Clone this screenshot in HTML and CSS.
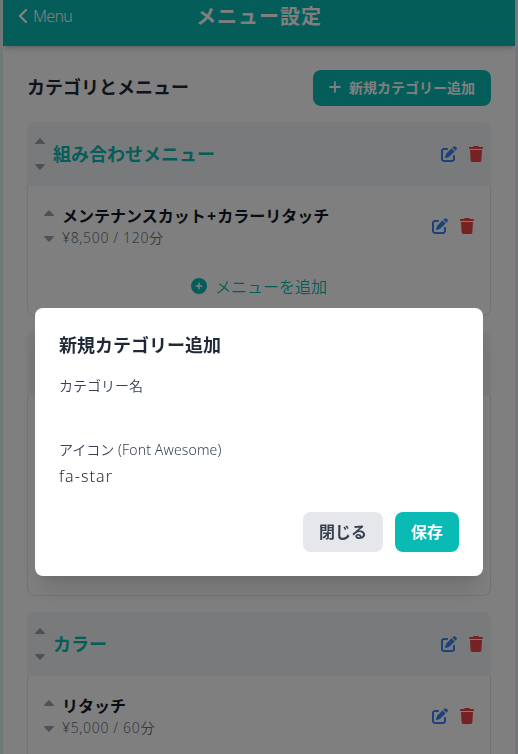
FILE: index.html
```html
<!DOCTYPE html>
<html lang="ja">
<head>
<meta charset="utf-8">
<title>メニュー設定</title>
<link rel="stylesheet" href="styles.css">
</head>
<body>
<svg class="defs" aria-hidden="true">
  <symbol id="edit" viewBox="0 0 512 512"><path d="M471.600 21.700c-21.900-21.900-57.300-21.900-79.200 0L362.300 51.700l97.900 97.900 30.100-30.100c21.900-21.900 21.900-57.300 0-79.200L471.600 21.700zm-299.200 220c-6.100 6.100-10.800 13.600-13.500 21.900l-29.600 88.800c-2.900 8.600-.6 18.100 5.800 24.600s15.900 8.700 24.600 5.800l88.800-29.600c8.200-2.700 15.700-7.400 21.900-13.500L437.700 172.300 339.700 74.300 172.400 241.700zM96 64C43 64 0 107 0 160V416c0 53 43 96 96 96H352c53 0 96-43 96-96V320c0-17.700-14.300-32-32-32s-32 14.300-32 32v96c0 17.700-14.300 32-32 32H96c-17.700 0-32-14.300-32-32V160c0-17.700 14.300-32 32-32h96c17.700 0 32-14.300 32-32s-14.300-32-32-32H96z"/></symbol>
  <symbol id="trash" viewBox="0 0 448 512"><path d="M135.200 17.700L128 32H32C14.300 32 0 46.300 0 64S14.300 96 32 96H416c17.700 0 32-14.300 32-32s-14.300-32-32-32H320l-7.200-14.300C307.400 6.800 296.300 0 284.200 0H163.800c-12.100 0-23.200 6.800-28.600 17.700zM416 128H32L53.200 467c1.600 25.300 22.600 45 47.900 45H346.900c25.300 0 46.300-19.700 47.900-45L416 128z"/></symbol>
  <symbol id="up" viewBox="0 0 10 6"><path d="M.7 6Q-.4 6 .3 5L4.300.6Q5 0 5.700.6L9.700 5Q10.400 6 9.300 6Z"/></symbol>
  <symbol id="down" viewBox="0 0 10 6"><path d="M.7 0Q-.4 0 .3 1L4.300 5.400Q5 6 5.700 5.400L9.700 1Q10.400 0 9.300 0Z"/></symbol>
  <symbol id="add" viewBox="0 0 16 16"><path fill-rule="evenodd" d="M8 0a8 8 0 1 0 0 16A8 8 0 0 0 8 0zM7.250 10.750v-2h-2a.75.75 0 0 1 0-1.500h2v-2a.75.75 0 0 1 1.500 0v2h2a.75.75 0 0 1 0 1.500h-2v2a.75.75 0 0 1-1.500 0z"/></symbol>
</svg>

<div class="app">
  <header class="topbar">
    <a class="back"><svg class="chevron" viewBox="0 0 10 16"><path d="M8 2L2 8l6 6"/></svg>Menu</a>
    <h1 class="page-title">メニュー設定</h1>
  </header>
  <main class="content">
    <div class="heading-row">
      <h2 class="heading">カテゴリとメニュー</h2>
      <button class="new-category"><svg class="plus" viewBox="0 0 12 12"><path d="M6 1v10M1 6h10"/></svg>新規カテゴリー追加</button>
    </div>

    <section class="card">
      <div class="card-head">
        <div class="sort"><svg><use href="#up"/></svg><svg><use href="#down"/></svg></div>
        <h3 class="card-title">組み合わせメニュー</h3>
        <div class="actions"><svg class="edit"><use href="#edit"/></svg><svg class="trash"><use href="#trash"/></svg></div>
      </div>
      <div class="card-body">
        <div class="item">
          <div class="sort"><svg><use href="#up"/></svg><svg><use href="#down"/></svg></div>
          <div class="item-text"><p class="name">メンテナンスカット<span class="joiner">+</span>カラーリタッチ</p><p class="price">¥8,500 / 120分</p></div>
          <div class="actions"><svg class="edit"><use href="#edit"/></svg><svg class="trash"><use href="#trash"/></svg></div>
        </div>
        <a class="add-menu"><svg><use href="#add"/></svg>メニューを追加</a>
      </div>
    </section>

    <section class="card card-covered">
      <div class="card-head"></div>
      <div class="card-body"></div>
    </section>

    <section class="card">
      <div class="card-head">
        <div class="sort"><svg><use href="#up"/></svg><svg><use href="#down"/></svg></div>
        <h3 class="card-title">カラー</h3>
        <div class="actions"><svg class="edit"><use href="#edit"/></svg><svg class="trash"><use href="#trash"/></svg></div>
      </div>
      <div class="card-body">
        <div class="item">
          <div class="sort"><svg><use href="#up"/></svg><svg><use href="#down"/></svg></div>
          <div class="item-text"><p class="name">リタッチ</p><p class="price">¥5,000 / 60分</p></div>
          <div class="actions"><svg class="edit"><use href="#edit"/></svg><svg class="trash"><use href="#trash"/></svg></div>
        </div>
      </div>
    </section>
  </main>
</div>

<div class="overlay">
  <div class="modal">
    <h2 class="modal-title">新規カテゴリー追加</h2>
    <div class="field"><div class="label">カテゴリー名</div><div class="value"></div></div>
    <div class="field"><div class="label">アイコン <span class="hint">(Font Awesome)</span></div><div class="value">fa-star</div></div>
    <div class="buttons"><button class="btn close">閉じる</button><button class="btn save">保存</button></div>
  </div>
</div>
</body>
</html>
```
FILE: styles.css
```css
* { box-sizing: border-box; margin: 0; padding: 0; }
html, body { height: 754px; overflow: hidden; }
body {
  background: #e0f2ef;
  color: #1f2937;
  font-family: "Noto Sans", "Noto Sans CJK JP", sans-serif;
  font-size: 16px;
  font-weight: 350;
}
svg { display: block; fill: currentColor; }
button { border: 0; font: inherit; }
.defs { display: none; }
.app { width: 512px; height: 754px; margin: 0 auto; background: #fff; overflow: hidden; }
.topbar {
  height: 46px;
  padding: 0 16px 12px;
  display: grid;
  grid-template-columns: 1fr auto 1fr;
  align-items: center;
  background: #0abab5;
  color: #fff;
  box-shadow: 0 4px 6px -1px rgba(0,0,0,.15), 0 2px 4px -2px rgba(0,0,0,.15);
}
.back { display: flex; align-items: center; gap: 5px; letter-spacing: -.7px; line-height: 22px; padding-bottom: 2px; margin-left: -1px; }
.chevron { width: 10px; height: 16px; fill: none; stroke: currentColor; stroke-width: 2.400; stroke-linecap: round; stroke-linejoin: round; }
.page-title { font-size: 20px; line-height: 28px; letter-spacing: 1px; }
.content { padding: 24px; }
.heading-row { height: 36px; display: flex; align-items: center; justify-content: space-between; margin-bottom: 16px; }
.heading { font-size: 18px; line-height: 28px; padding-bottom: 2px; }
.new-category { height: 36px; padding: 0 16px 2px; display: flex; align-items: center; gap: 8px; border-radius: 8px; background: #0abab5; color: #fff; font-size: 14px; font-weight: 700; }
.plus { width: 12px; height: 12px; fill: none; stroke: currentColor; stroke-width: 1.800; stroke-linecap: round; }
.card { height: 194px; margin-bottom: 16px; border-radius: 8px; display: flex; flex-direction: column; }
.card-covered { height: 264px; }
.card-head { height: 64px; flex-shrink: 0; padding: 0 8px; display: flex; align-items: center; background: #f3f4f6; border-radius: 8px 8px 0 0; color: #0abab5; }
.card-body { flex: 1; min-height: 0; padding: 13px 8px 0; border: 1px solid #e5e7eb; border-top: 0; border-radius: 0 0 8px 8px; }
.card-title { font-size: 18px; line-height: 28px; margin-left: 8px; }
.sort { width: 10px; height: 32px; display: flex; flex-direction: column; justify-content: space-between; color: #9ca3af; }
.sort svg { width: 10px; height: 6px; }
.actions { margin-left: auto; display: flex; align-items: center; gap: 12px; }
.edit { width: 16px; height: 16px; color: #3b82f6; }
.trash { width: 14px; height: 16px; color: #ef4444; }
.item { height: 54px; padding: 0 8px; display: flex; align-items: center; }
.item .item-text { margin-left: 8px; }
.name { font-size: 16px; line-height: 24px; font-weight: 700; color: #111827; }
.joiner { padding: 0 1.250px; }
.price { font-size: 14px; line-height: 20px; color: #6b7280; letter-spacing: .65px; }
.add-menu { height: 66px; display: flex; align-items: center; justify-content: center; gap: 8px; color: #0abab5; }
.add-menu svg { width: 16px; height: 16px; }
.overlay { position: fixed; inset: 0; padding: 308px 35px 0; background: rgba(0,0,0,.5); }
.modal { height: 268px; padding: 23px 24px 24px; display: flex; flex-direction: column; border-radius: 8px; background: #fff; box-shadow: 0 20px 25px -5px rgba(0,0,0,.1), 0 8px 10px -6px rgba(0,0,0,.1); }
.modal-title { font-size: 18px; line-height: 28px; margin-bottom: 17px; }
.field { height: 64px; }
.label { font-size: 14px; line-height: 20px; color: #374151; }
.hint { letter-spacing: .15px; }
.value { height: 24px; margin-top: 4px; line-height: 24px; letter-spacing: 1.100px; }
.buttons { display: flex; justify-content: flex-end; gap: 12px; margin-top: auto; }
.btn { height: 40px; padding: 0 16px; border-radius: 8px; font-weight: 700; line-height: 24px; }
.close { background: #e5e7eb; color: #374151; }
.save { background: #0abab5; color: #fff; }
```
